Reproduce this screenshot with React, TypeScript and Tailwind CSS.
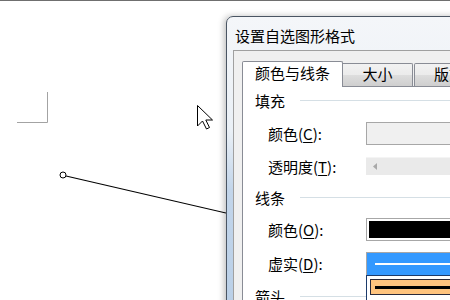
import React from 'react';

const font = { fontFamily: '"Noto Sans CJK SC", "Liberation Sans", sans-serif' };

const Section = ({ title, className = '' }: { title: string; className?: string }) => (
  <div className={`flex items-center h-[20px] pl-[12px] ${className}`}>
    <span className="leading-none">{title}</span>
    <div className="flex-1 h-px bg-[#d5dfe5] ml-[15px]" />
  </div>
);

const Label = ({ text, hot, tail }: { text: string; hot: string; tail?: string }) => (
  <span className="w-[98px] shrink-0 leading-none whitespace-nowrap">
    {text}(<span className="underline underline-offset-2">{hot}</span>):{tail}
  </span>
);

const Canvas = () => (
  <svg width="226" height="299" className="block shrink-0">
    {/* page corner mark */}
    <path d="M47.5 91 V121.5 H17" fill="none" stroke="#a3a3a3" strokeWidth="1" />
    {/* connector line */}
    <line x1="66" y1="175" x2="226" y2="212" stroke="#000" strokeWidth="1.1" />
    <circle cx="63" cy="174" r="3" fill="#fff" stroke="#000" strokeWidth="1" />
    {/* mouse pointer */}
    <path
      d="M197.5 104.5 V125 L202.5 120 L206.5 128 L209.5 126.5 L205.8 119 L212.5 119 Z"
      fill="#fff"
      stroke="#000"
      strokeWidth="1"
      strokeLinejoin="round"
    />
  </svg>
);

const Tabs = () => (
  <div className="flex items-end h-[25px] text-[15px]">
    <div className="relative z-10 -mb-px w-[101px] h-[26px] bg-white border border-b-0 border-[#898c95] rounded-t-[2px] flex items-center justify-center pb-[3px]">
      颜色与线条
    </div>
    <div className="w-[70px] h-[23px] border border-b-0 border-l-0 border-[#898c95] rounded-tr-[2px] bg-[linear-gradient(to_bottom,#f2f2f2_0%,#ebebeb_50%,#dddddd_51%,#cfcfcf_100%)] flex items-center justify-center pb-[1px]">
      大小
    </div>
    <div className="w-[70px] h-[23px] ml-[1px] border border-b-0 border-[#898c95] rounded-tl-[2px] bg-[linear-gradient(to_bottom,#f2f2f2_0%,#ebebeb_50%,#dddddd_51%,#cfcfcf_100%)] flex items-center justify-center pb-[1px]">
      版式
    </div>
  </div>
);

const Panel = () => (
  <div className="flex-1 bg-white border-l border-t border-[#898c95] text-[15px] text-black">
    <Section title="填充" className="mt-[3px]" />

    <div className="flex items-center h-[23px] mt-[12px] pl-[25px]">
      <Label text="颜色" hot="C" />
      <div className="flex-1 h-full border border-[#a7a7a7] bg-[#f0f0f0]" />
    </div>

    <div className="flex items-center h-[18px] mt-[12px] pl-[25px]">
      <Label text="透明度" hot="T" />
      <div className="flex-1 h-full bg-[#eaeaea] border-t border-[#f4f4f4] flex items-center pl-[7px]">
        <svg width="5" height="7" className="block">
          <path d="M4 0 L0 3.5 L4 7 Z" fill="#a9a9a9" />
        </svg>
      </div>
    </div>

    <Section title="线条" className="mt-[12px]" />

    <div className="flex items-center h-[23px] mt-[11px] pl-[25px]">
      <Label text="颜色" hot="O" />
      <div className="flex-1 h-full border border-[#a7a7a7] p-[2px] bg-white">
        <div className="w-full h-full bg-black" />
      </div>
    </div>

    <div className="flex items-center h-[23px] mt-[11px] pl-[25px]">
      <Label text="虚实" hot="D" />
      <div className="relative flex-1 h-full border-t border-l border-[#a7a7a7] bg-[#3399ff] flex items-center pl-[8px]">
        <div className="w-full h-[2px] bg-white" />
        {/* open drop-down list */}
        <div className="absolute left-[-1px] right-0 top-[22px] h-[40px] z-20 border border-[#1c3b6b] bg-white p-[3px]">
          <div className="h-[16px] border border-[#2a2a3a] bg-[#ffc47e] flex items-center pl-[4px]">
            <div className="w-full h-[3px] bg-black" />
          </div>
        </div>
      </div>
    </div>

    <Section title="箭头" className="mt-[11px]" />
  </div>
);

export default function App() {
  return (
    <div className="w-[450px] h-[300px] overflow-hidden bg-white border-t border-[#6f6f6f] flex" style={font}>
      <Canvas />
      <div className="mt-[15px] w-[260px] h-[300px] shrink-0 flex flex-col rounded-tl-[7px] border border-[#4a5563] shadow-[-2px_0_6px_rgba(0,0,0,0.25)] bg-[linear-gradient(to_bottom,#f4f6f9_0%,#eaf0f6_38%,#c2d5ea_58%,#b9cfe7_100%)]">
        <div className="h-[33px] shrink-0 flex items-center pl-[8px] pt-[4px] text-[15px] text-black leading-none">
          设置自选图形格式
        </div>
        <div className="flex-1 ml-[6px] flex flex-col border-l border-t border-[#a0a0a0] bg-[#f0f0f0] pt-[10px] pl-[8px]">
          <Tabs />
          <Panel />
        </div>
      </div>
    </div>
  );
}
